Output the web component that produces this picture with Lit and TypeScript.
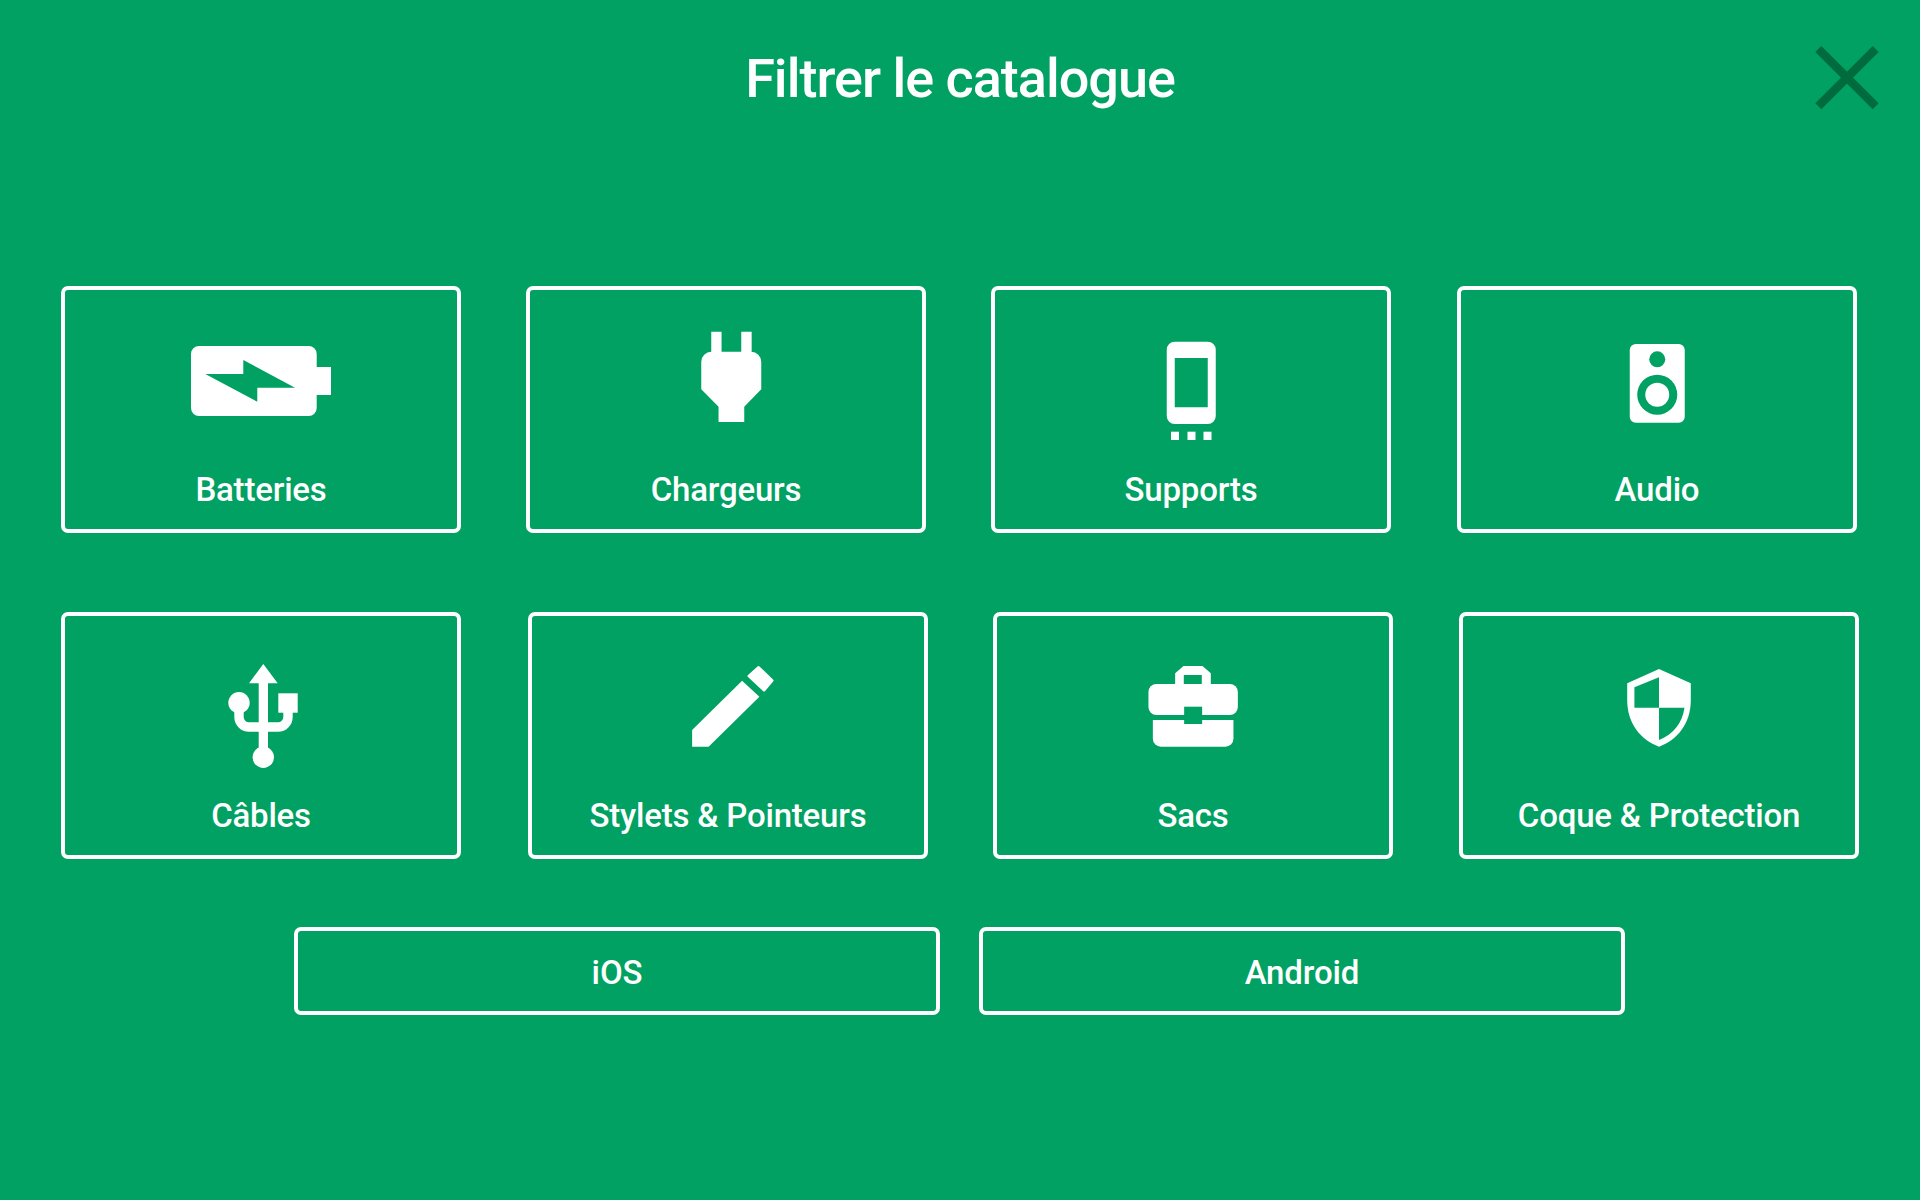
import { LitElement, html, css, svg } from "lit";
import { customElement } from "lit/decorators.js";

const G = "#00a162";
const icons: Record<string, unknown> = {
  battery: svg`<path fill="#fff" fill-rule="evenodd" d="M-62 60H47.7a8 8 0 0 1 8 8V81H70V109H55.7V122a8 8 0 0 1-8 8H-62a8 8 0 0 1-8-8V68a8 8 0 0 1 8-8ZM-17.7 74L34 101.7H-3.7V115.7L-55.7 88H-17.7Z"/>`,
  plug: svg`<path fill="#fff" d="M-14.75 45.7H-4.45V65.7H15.25V45.7H25.65V65.7H25.25a10 10 0 0 1 10 10V103.3L18.25 120.7V136H-7.45V120.7L-24.75 103.3V75.7a10 10 0 0 1 10-10Z"/>`,
  phone: svg`<path fill="#fff" fill-rule="evenodd" d="M-16.25 55.7H16.75a8 8 0 0 1 8 8V130a8 8 0 0 1-8 8H-16.25a8 8 0 0 1-8-8V63.7a8 8 0 0 1 8-8ZM-16.25 72V121.3H16.75V72Z"/><rect fill="#fff" x="-20" y="145.7" width="8" height="8.3"/><rect fill="#fff" x="-3.5" y="145.7" width="8" height="8.3"/><rect fill="#fff" x="12.5" y="145.7" width="8" height="8.3"/>`,
  speaker: svg`<rect fill="#fff" x="-27.25" y="58" width="55" height="78.7" rx="6"/><circle fill="${G}" cx="0.25" cy="73.3" r="8"/><circle fill="${G}" cx="0.25" cy="108.7" r="20"/><circle fill="#fff" cx="0.25" cy="108.7" r="12"/>`,
  usb: svg`<path fill="#fff" d="M2.3 52L16.7 71.3H7V146H-2.3V71.3H-12Z"/><circle fill="#fff" cx="-22" cy="90.7" r="10.7"/><rect fill="#fff" x="17.3" y="81.3" width="19.4" height="19.4"/><circle fill="#fff" cx="2.3" cy="145.3" r="10.7"/><path fill="none" stroke="#fff" stroke-width="9.4" d="M-22 95V105a10 10 0 0 0 10 10H17a10 10 0 0 0 10-10V95"/>`,
  pencil: svg`<path fill="#fff" d="M-35.9 118L14.1 68.7L31.4 84.7L-19.4 134.7H-35.9Z"/><path fill="#fff" stroke="#fff" stroke-width="3" stroke-linejoin="round" d="M21 64L30.5 55.5L44 68.5L36 78Z"/>`,
  bag: svg`<path fill="#fff" fill-rule="evenodd" d="M-17.85 72V61.3L-9.5 54H9.5L17.8 61.3V72H8.8V63H-9.2V72Z"/><path fill="#fff" d="M-36.55 72H36.85a8 8 0 0 1 8 8V95a8 8 0 0 1-8 8H-36.55a8 8 0 0 1-8-8V80a8 8 0 0 1 8-8Z"/><path fill="#fff" d="M-40.15 108H40.45V126.7a8 8 0 0 1-8 8H-32.15a8 8 0 0 1-8-8Z"/><rect fill="${G}" x="-8.85" y="94.7" width="18" height="17.3"/>`,
  shield: svg`<path fill="#fff" d="M0 57L31.8 71.3V88C31.8 112 18 128 0 134.7C-18 128 -31.8 112 -31.8 88V71.3Z"/><path fill="${G}" d="M0 65.3L-24.6 75.3V95.7H0Z"/><path fill="${G}" d="M0 95.7H25.5C23.5 110 15 122 0 128Z"/>`,
};

const row1 = [
  ["Batteries", "battery"],
  ["Chargeurs", "plug"],
  ["Supports", "phone"],
  ["Audio", "speaker"],
];
const row2 = [
  ["Câbles", "usb"],
  ["Stylets & Pointeurs", "pencil"],
  ["Sacs", "bag"],
  ["Coque & Protection", "shield"],
];

@customElement("app-root")
export class AppRoot extends LitElement {
  static styles = css`
    :host {
      display: block;
      min-height: 1200px;
      background: #00a162;
      color: #fff;
      font-family: Roboto, "Liberation Sans", sans-serif;
      box-sizing: border-box;
    }
    header {
      display: grid;
      grid-template-columns: 1fr auto 1fr;
      align-items: start;
      height: 286px;
      padding: 0 41px;
      box-sizing: border-box;
    }
    h1 {
      grid-column: 2;
      margin: 0;
      padding-top: 46px;
      font-size: 54px;
      line-height: 66px;
      font-weight: 500;
      letter-spacing: -1px;
    }
    .close {
      grid-column: 3;
      justify-self: end;
      margin-top: 46px;
      width: 64px;
      height: 64px;
      display: block;
    }
    .close svg {
      display: block;
    }
    .row {
      display: grid;
      padding-left: 61px;
      grid-template-rows: 247px;
    }
    .r1 {
      grid-template-columns: 465px 465px 466px 400px;
      margin-bottom: 79px;
    }
    .r2 {
      grid-template-columns: 467px 465px 466px 400px;
      margin-bottom: 68px;
    }
    .card {
      width: 400px;
      box-sizing: border-box;
      border: 4px solid #fff;
      border-radius: 7px;
      padding-top: 36px;
      display: flex;
      flex-direction: column;
      align-items: center;
    }
    .card svg {
      display: block;
      flex: none;
    }
    .label {
      margin-top: 22px;
      font-size: 33px;
      line-height: 44px;
      font-weight: 500;
      letter-spacing: -0.2px;
      white-space: nowrap;
    }
    .os {
      display: grid;
      grid-template-columns: 646px 646px;
      column-gap: 39px;
      padding-left: 294px;
    }
    .os div {
      height: 88px;
      box-sizing: border-box;
      border: 4px solid #fff;
      border-radius: 7px;
      padding-top: 2px;
      display: flex;
      align-items: center;
      justify-content: center;
      font-size: 33px;
      font-weight: 500;
      letter-spacing: -0.12px;
    }
  `;

  private card([name, icon]: string[]) {
    return html`<div class="card">
      <svg width="200" height="120" viewBox="-100 40 200 120" aria-hidden="true">${icons[icon]}</svg>
      <span class="label">${name}</span>
    </div>`;
  }

  render() {
    return html`
      <header>
        <h1>Filtrer le catalogue</h1>
        <div class="close" aria-label="Fermer">
          <svg width="64" height="64" viewBox="0 0 64 64">
            <path d="M3.3 3L60.7 60.3M60.7 3L3.3 60.3" fill="none" stroke="#006b3c" stroke-width="8.5" />
          </svg>
        </div>
      </header>
      <div class="row r1">${row1.map((c) => this.card(c))}</div>
      <div class="row r2">${row2.map((c) => this.card(c))}</div>
      <div class="os"><div>iOS</div><div>Android</div></div>
    `;
  }
}
